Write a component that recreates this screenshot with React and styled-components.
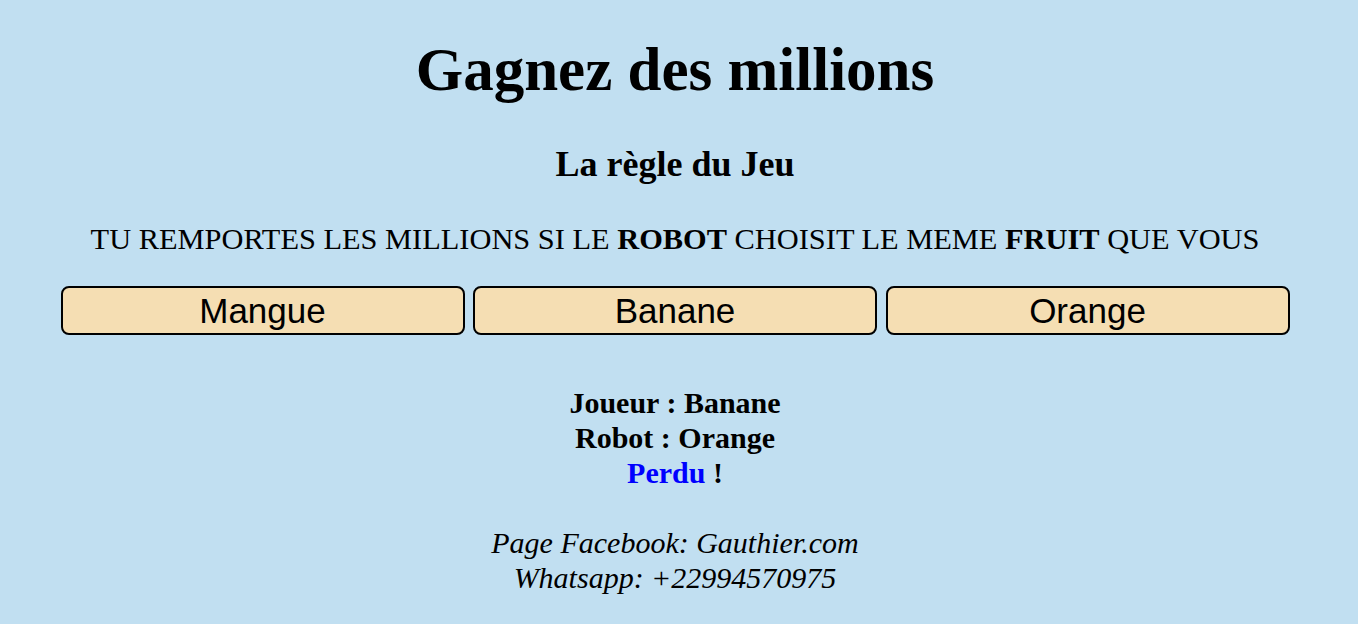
import React, { useState } from "react";
import styled, { createGlobalStyle } from "styled-components";

const GlobalStyle = createGlobalStyle`
  html, body {
    margin: 0;
    padding: 0;
    background-color: #c1dff1;
  }
  body {
    font-family: "Liberation Serif", "Times New Roman", serif;
    color: #000;
  }
`;

const Page = styled.div`
  display: flex;
  flex-direction: column;
  align-items: center;
  text-align: center;
  padding: 30px 8px 0 0;
`;

const Title = styled.h1`
  margin: 0;
  font-size: 61px;
  font-weight: bold;
  line-height: 80px;
`;

const Subtitle = styled.h3`
  margin: 34px 0 0;
  font-size: 36px;
  font-weight: bold;
  line-height: 40px;
`;

const Rule = styled.p`
  margin: 38px 0 0;
  font-size: 30.4px;
  line-height: 34px;
`;

const ButtonRow = styled.div`
  display: flex;
  justify-content: center;
  gap: 8.5px;
  margin-top: 30px;
  width: 100%;
`;

const FruitButton = styled.button`
  width: 404px;
  height: 49px;
  background-color: #f5deb3;
  border: 2px solid #000;
  border-radius: 8px;
  font-family: "Liberation Sans", Arial, sans-serif;
  font-size: 35px;
  color: #000;
  cursor: pointer;
  padding: 0;
`;

const Result = styled.div`
  margin-top: 50px;
  font-size: 30px;
  font-weight: bold;
  line-height: 35px;
`;

const Verdict = styled.span`
  color: ${(p) => (p.$win ? "#008000" : "#0000ff")};
`;

const Footer = styled.div`
  margin-top: 35px;
  font-size: 30px;
  font-style: italic;
  line-height: 35px;
`;

const fruits = ["Mangue", "Banane", "Orange"];

export default function App() {
  const [player, setPlayer] = useState("Banane");
  const [robot, setRobot] = useState("Orange");

  const play = (fruit) => {
    setPlayer(fruit);
    setRobot(fruits[Math.floor(Math.random() * fruits.length)]);
  };

  const win = player === robot;

  return (
    <>
      <GlobalStyle />
      <Page>
        <Title>Gagnez des millions</Title>
        <Subtitle>La règle du Jeu</Subtitle>
        <Rule>
          TU REMPORTES LES MILLIONS SI LE <b>ROBOT</b> CHOISIT LE MEME{" "}
          <b>FRUIT</b> QUE VOUS
        </Rule>
        <ButtonRow>
          {fruits.map((f) => (
            <FruitButton key={f} onClick={() => play(f)}>
              {f}
            </FruitButton>
          ))}
        </ButtonRow>
        <Result>
          Joueur : {player}
          <br />
          Robot : {robot}
          <br />
          <Verdict $win={win}>{win ? "Gagné" : "Perdu"}</Verdict> !
        </Result>
        <Footer>
          Page Facebook: Gauthier.com
          <br />
          Whatsapp: +22994570975
        </Footer>
      </Page>
    </>
  );
}
